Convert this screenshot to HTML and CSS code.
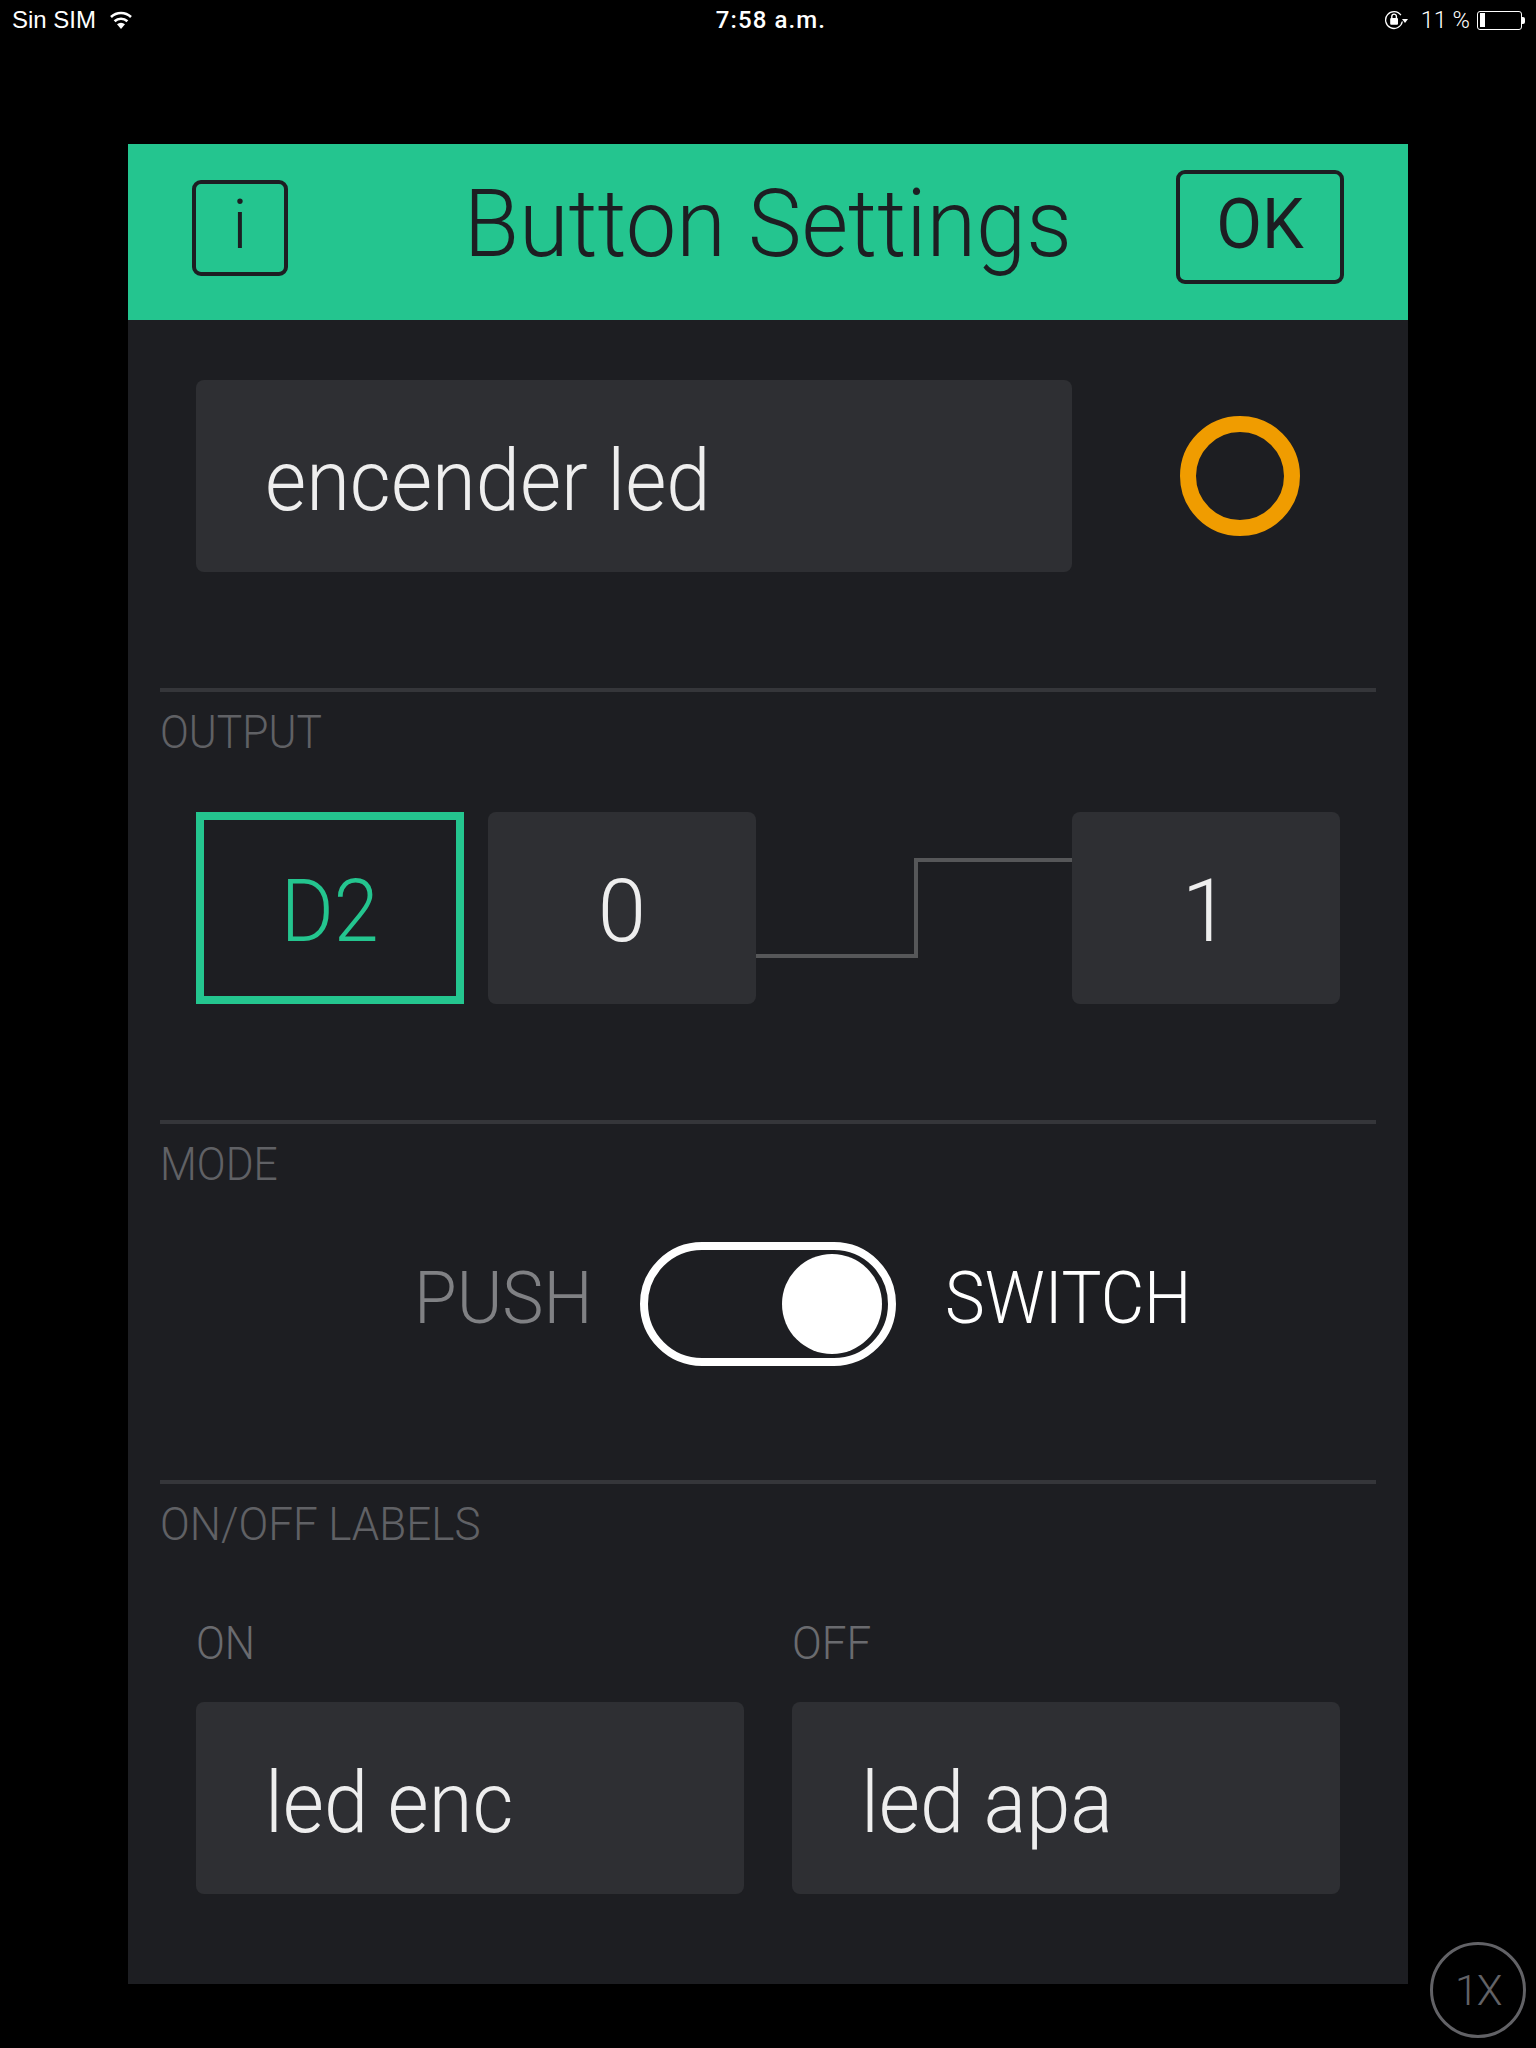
FILE: index.html
```html
<!DOCTYPE html>
<html lang="es">
<head>
<meta charset="utf-8">
<title>Button Settings</title>
<link rel="stylesheet" href="styles.css">
</head>
<body>
<div class="status">
  <div class="status-left">
    <span class="carrier">Sin SIM</span>
    <svg class="wifi" width="22" height="18" viewBox="0 0 22 18"><path d="M11 18 L7 13.2 A6 6 0 0 1 15 13.2 Z" fill="#fff"/><path d="M4.6 10.2 A9.4 9.4 0 0 1 17.4 10.2" fill="none" stroke="#fff" stroke-width="2.6"/><path d="M1 6 A14.6 14.6 0 0 1 21 6" fill="none" stroke="#fff" stroke-width="2.6"/></svg>
  </div>
  <span class="time">7:58 a.m.</span>
  <div class="status-right">
    <svg class="lock" width="24" height="20" viewBox="0 0 24 20"><path d="M15.9 5.2 A8.4 8.4 0 1 0 17.3 11.5" fill="none" stroke="#fff" stroke-width="1.3"/><rect x="5.2" y="8" width="7.8" height="6.8" rx="1" fill="#fff"/><path d="M6.8 8 V6.4 A2.3 2.3 0 0 1 11.4 6.4 V8" fill="none" stroke="#fff" stroke-width="1.4"/><path d="M17 9 H23 L20 13 Z" fill="#fff"/></svg>
    <span class="pct">11 %</span>
    <div class="battery"><div class="battery-level"></div></div>
    <div class="battery-nub"></div>
  </div>
</div>

<main class="panel">
  <header class="head">
    <div class="info"><span>i</span></div>
    <h1 class="title"><span class="cond title-text">Button Settings</span></h1>
    <div class="ok"><span class="cond ok-text">OK</span></div>
  </header>

  <div class="name-row">
    <div class="field name-field"><span class="cond field-text">encender led</span></div>
    <div class="dot"></div>
  </div>

  <section class="sec sec-output">
    <h2 class="sec-label"><span class="cond narrow">OUTPUT</span></h2>
    <div class="pins">
      <div class="box pin-box"><span class="cond pin-text">D2</span></div>
      <div class="box value-box"><span class="value-text">0</span></div>
      <svg class="wave" viewBox="0 0 316 192" height="192" preserveAspectRatio="none"><path d="M0 144 H160 V48 H316" fill="none" stroke="#565759" stroke-width="4"/></svg>
      <div class="box value-box"><span class="value-text">1</span></div>
    </div>
  </section>

  <section class="sec sec-mode">
    <h2 class="sec-label"><span class="cond narrow">MODE</span></h2>
    <div class="mode-row">
      <span class="mode push"><span class="cond push-text">PUSH</span></span>
      <div class="toggle"><div class="knob"></div></div>
      <span class="mode switch"><span class="cond switch-text">SWITCH</span></span>
    </div>
  </section>

  <section class="sec sec-labels">
    <h2 class="sec-label"><span class="cond wider">ON/OFF LABELS</span></h2>
    <div class="onoff">
      <div class="onoff-col">
        <div class="small-label"><span class="cond narrow">ON</span></div>
        <div class="field"><span class="cond field-text">led enc</span></div>
      </div>
      <div class="onoff-col">
        <div class="small-label"><span class="cond wider">OFF</span></div>
        <div class="field"><span class="cond field-text">led apa</span></div>
      </div>
    </div>
  </section>
</main>

<div class="speed"><span>1X</span></div>
</body>
</html>
```

FILE: styles.css
```css
* { box-sizing: border-box; }
html, body { margin: 0; padding: 0; }
body {
  width: 1536px;
  height: 2048px;
  background: #000;
  font-family: Roboto, "Liberation Sans", sans-serif;
  position: relative;
  overflow: hidden;
}
.cond { display: inline-block; transform-origin: left center; }
.status {
  height: 40px;
  display: grid;
  grid-template-columns: 1fr auto 1fr;
  align-items: center;
  color: #fff;
  font-size: 24px;
  padding: 0 11px 0 12px;
}
.status-left { display: flex; align-items: center; gap: 14px; }
.carrier { font-family: "Liberation Sans", Arial, sans-serif; }
.status-right { display: flex; align-items: center; justify-content: flex-end; }
.time { font-weight: 500; letter-spacing: 1.1px; margin-left: 5px; }
.lock { margin-right: 12px; }
.pct { margin-right: 7px; font-size: 23.5px; font-weight: 300; }
.battery {
  width: 45px;
  height: 19px;
  border: 1.5px solid #fff;
  border-radius: 3px;
  padding: 1.5px;
}
.battery-level { width: 5px; height: 100%; background: #fff; }
.battery-nub { width: 3px; height: 7px; background: #fff; border-radius: 0 2px 2px 0; }

.panel {
  width: 1280px;
  height: 1840px;
  margin: 104px 0 0 128px;
  background: #1d1e22;
}
.head {
  height: 176px;
  background: #24c58f;
  color: #1d1e22;
  display: flex;
  align-items: center;
  padding: 0 64px 8px;
}
.info {
  width: 96px;
  height: 96px;
  border: 4px solid #1d1e22;
  border-radius: 9px;
  display: flex;
  align-items: center;
  justify-content: center;
  font-size: 68px;
  font-weight: 300;
  padding-bottom: 6px;
}
.title {
  flex: 1;
  margin: 0;
  font-size: 94px;
  font-weight: 300;
  text-align: center;
  line-height: 1;
  padding: 0 0 8px 72px;
}
.title-text { transform: scaleX(0.96); transform-origin: center; }
.ok {
  width: 168px;
  height: 114px;
  border: 4px solid #1d1e22;
  border-radius: 9px;
  display: flex;
  align-items: center;
  justify-content: center;
  font-size: 70px;
  font-weight: 400;
  padding-bottom: 6px;
  margin-bottom: 2px;
}
.ok-text { transform: scaleX(0.95); transform-origin: center; }
.name-row {
  display: flex;
  align-items: center;
  padding: 60px 0 0 68px;
}
.field {
  height: 192px;
  background: #2e2f33;
  border-radius: 8px;
  display: flex;
  align-items: center;
  padding: 8px 0 0 69px;
}
.name-field { width: 876px; }
.field-text {
  color: #eeeeee;
  font-size: 86px;
  font-weight: 300;
  transform: scaleX(0.925);
}
.dot {
  width: 120px;
  height: 120px;
  border: 16px solid #f09c00;
  border-radius: 50%;
  margin-left: 108px;
}
.sec {
  margin: 0 32px;
  border-top: 4px solid #35363a;
}
.sec-output { margin-top: 116px; height: 432px; }
.sec-mode { height: 360px; }
.sec-labels { height: 420px; }
.sec-label {
  margin: 13px 0 0;
  color: #606165;
  font-size: 46px;
  line-height: 54px;
  font-weight: 300;
}
.narrow { transform: scaleX(0.925); }
.wider { transform: scaleX(0.955); }
.pins {
  display: flex;
  margin: 53px 0 0 36px;
  width: 1144px;
}
.box {
  width: 268px;
  height: 192px;
  border-radius: 8px;
  display: flex;
  align-items: center;
  justify-content: center;
  font-size: 87px;
  font-weight: 300;
  flex: none;
  padding-top: 6px;
}
.pin-box {
  border: 8px solid #24c58f;
  border-radius: 0;
  color: #24c58f;
  margin-right: 24px;
}
.pin-text { transform: scaleX(0.93); transform-origin: center; }
.value-box { background: #2e2f33; color: #eeeeee; }
.wave { flex: 1; width: 316px; }
.mode-row {
  display: flex;
  align-items: center;
  margin-top: 51px;
  padding-left: 254px;
}
.mode { font-size: 73px; font-weight: 300; width: 170px; padding-bottom: 12px; }
.push { color: #808184; margin-right: 56px; }
.switch { color: #fff; margin-left: 49px; }
.push-text { transform: scaleX(0.95); }
.switch-text { transform: scaleX(0.917); }
.toggle {
  width: 256px;
  height: 124px;
  border: 8px solid #fff;
  border-radius: 62px;
  background: #1d1e22;
  display: flex;
  align-items: center;
  justify-content: flex-end;
  padding-right: 6px;
}
.knob { width: 100px; height: 100px; background: #fff; border-radius: 50%; }
.onoff {
  display: flex;
  gap: 48px;
  margin: 67px 0 0 36px;
}
.onoff-col { width: 548px; }
.small-label {
  color: #6a6b6f;
  font-size: 46px;
  line-height: 50px;
  font-weight: 300;
  margin-bottom: 34px;
}
.speed {
  position: absolute;
  left: 1430px;
  top: 1942px;
  width: 96px;
  height: 96px;
  border: 3px solid #626266;
  border-radius: 50%;
  display: flex;
  align-items: center;
  justify-content: center;
  color: #626266;
  font-size: 42px;
  font-weight: 300;
  letter-spacing: -1.5px;
}
```
